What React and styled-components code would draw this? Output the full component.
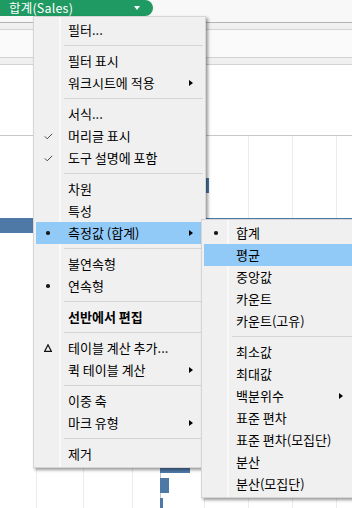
import React from 'react'
import styled, { createGlobalStyle } from 'styled-components'

const GlobalStyle = createGlobalStyle`
  html, body {
    margin: 0;
    padding: 0;
    background: #ffffff;
  }
  body {
    font-family: "Noto Sans CJK KR", "Noto Sans", sans-serif;
    overflow: hidden;
  }
`

const Page = styled.div`
  position: relative;
  width: 352px;
  height: 508px;
  overflow: hidden;
  background: #ffffff;
`

const TopBar = styled.div`
  height: 22px;
  background: #f8f8f8;
  border-bottom: 1px solid #b4b4b4;
  display: flex;
  align-items: flex-start;
`

const Pill = styled.div`
  width: 153px;
  height: 16px;
  background: #1f9a62;
  border-radius: 0 8px 8px 0;
  display: flex;
  align-items: center;
  justify-content: space-between;
  padding: 0 13px 0 9px;
  box-sizing: border-box;
  color: #ffffff;
  font-size: 12.5px;
`

const PillText = styled.span`
  white-space: nowrap;
  line-height: 16px;
  letter-spacing: 0.2px;
`

const Caret = styled.span`
  width: 0;
  height: 0;
  border-left: 3.5px solid transparent;
  border-right: 3.5px solid transparent;
  border-top: 4px solid #ffffff;
`

const Band = styled.div`
  height: ${p => p.$h}px;
  background: ${p => p.$bg};
  border-bottom: 1px solid #d2d2d2;
`

const Spacer = styled.div`
  height: 70px;
`

const Chart = styled.div`
  position: relative;
  border-top: 1px solid #c8c8c8;
  height: 372px;
`

const GridLine = styled.div`
  position: absolute;
  top: 0;
  bottom: 0;
  width: 1px;
  background: ${p => (p.$axis ? '#c4c4c4' : '#ececec')};
`

const BarRow = styled.div`
  position: relative;
  height: 20px;
  padding-top: 2px;
  box-sizing: border-box;
`

const Bar = styled.div`
  height: 15px;
  background: #4e79a7;
`

const Menu = styled.div`
  position: absolute;
  left: ${p => p.$left}px;
  top: ${p => p.$top}px;
  width: ${p => p.$width}px;
  box-sizing: border-box;
  padding: 2px;
  border: 1px solid #d6d6d6;
  background: linear-gradient(to right, #f0f0f0 25px, #f9f9f9 25px, #f9f9f9 27px, #f0f0f0 27px);
  box-shadow: 2px 2px 3px rgba(0, 0, 0, 0.4);
  font-size: 13px;
  color: #000000;
`

const Row = styled.div`
  height: 22px;
  display: flex;
  align-items: center;
  background: ${p => (p.$active ? '#91c9f7' : 'transparent')};
  font-weight: ${p => (p.$bold ? 700 : 400)};
`

const Gutter = styled.div`
  width: 24px;
  margin-right: 8px;
  display: flex;
  align-items: center;
  justify-content: center;
`

const Label = styled.span`
  flex: 1;
  white-space: nowrap;
  line-height: 22px;
`

const Arrow = styled.span`
  width: 0;
  height: 0;
  margin-right: 10px;
  border-top: 3.5px solid transparent;
  border-bottom: 3.5px solid transparent;
  border-left: 4px solid #000000;
`

const Separator = styled.div`
  height: 9px;
  display: flex;
  align-items: center;
  padding-left: 28px;

  &::after {
    content: '';
    flex: 1;
    height: 1px;
    background: #d4d4d4;
  }
`

const Dot = styled.span`
  width: 3.5px;
  height: 3.5px;
  border-radius: 50%;
  background: #1a1a1a;
`

const Check = () => (
  <svg width="9" height="7" viewBox="0 0 9 7">
    <polyline points="0.8,3.4 3.2,5.8 8.2,0.8" fill="none" stroke="#4a4a4a" strokeWidth="1" />
  </svg>
)

const Delta = () => (
  <svg width="8" height="8" viewBox="0 0 8 8">
    <polygon points="4,0.8 7.3,7.3 0.7,7.3" fill="none" stroke="#111111" strokeWidth="1.2" />
  </svg>
)

const marks = {
  check: <Check />,
  dot: <Dot />,
  delta: <Delta />
}

const mainItems = [
  { label: '필터...' }, 'sep',
  { label: '필터 표시' },
  { label: '워크시트에 적용', sub: true }, 'sep',
  { label: '서식...' },
  { label: '머리글 표시', mark: 'check' },
  { label: '도구 설명에 포함', mark: 'check' }, 'sep',
  { label: '차원' },
  { label: '특성' },
  { label: '측정값 (합계)', mark: 'dot', sub: true, active: true }, 'sep',
  { label: '불연속형' },
  { label: '연속형', mark: 'dot' }, 'sep',
  { label: '선반에서 편집', bold: true }, 'sep',
  { label: '테이블 계산 추가...', mark: 'delta' },
  { label: '퀵 테이블 계산', sub: true }, 'sep',
  { label: '이중 축' },
  { label: '마크 유형', sub: true }, 'sep',
  { label: '제거' }
]

const subItems = [
  { label: '합계', mark: 'dot' },
  { label: '평균', active: true },
  { label: '중앙값' },
  { label: '카운트' },
  { label: '카운트(고유)' }, 'sep',
  { label: '최소값' },
  { label: '최대값' },
  { label: '백분위수', sub: true },
  { label: '표준 편차' },
  { label: '표준 편차(모집단)' },
  { label: '분산' },
  { label: '분산(모집단)' }
]

const bars = [
  [160, 40], [160, 26], [160, 49], [160, 30], [0, 360],
  [160, 60], [160, 44], [160, 35], [160, 28], [160, 50],
  [160, 20], [160, 38], [160, 24], [160, 31], [160, 18],
  [160, 22], [160, 30], [160, 9], [160, 3]
]

const gridLines = [36, 83, 132, 204, 248, 292, 336]

const ContextMenu = ({ items, left, top, width }) => (
  <Menu $left={left} $top={top} $width={width}>
    {items.map((item, i) =>
      item === 'sep' ? (
        <Separator key={i} />
      ) : (
        <Row key={i} $active={item.active} $bold={item.bold}>
          <Gutter>{item.mark && marks[item.mark]}</Gutter>
          <Label>{item.label}</Label>
          {item.sub && <Arrow />}
        </Row>
      )
    )}
  </Menu>
)

const App = () => {
  return (
    <Page>
      <GlobalStyle />
      <TopBar>
        <Pill>
          <PillText>합계(Sales)</PillText>
          <Caret />
        </Pill>
      </TopBar>
      <Band $h={6} $bg="#f0f0f0" />
      <Band $h={27} $bg="#fafafa" />
      <Band $h={6} $bg="#f0f0f0" />
      <Spacer />
      <Chart>
        {gridLines.map(x => <GridLine key={x} style={{ left: x }} />)}
        <GridLine $axis style={{ left: 160 }} />
        {bars.map(([left, width], i) => (
          <BarRow key={i}>
            <Bar style={{ marginLeft: left, width }} />
          </BarRow>
        ))}
      </Chart>
      <ContextMenu items={mainItems} left={33} top={16} width={173} />
      <ContextMenu items={subItems} left={201} top={219} width={155} />
    </Page>
  )
}

export default App
